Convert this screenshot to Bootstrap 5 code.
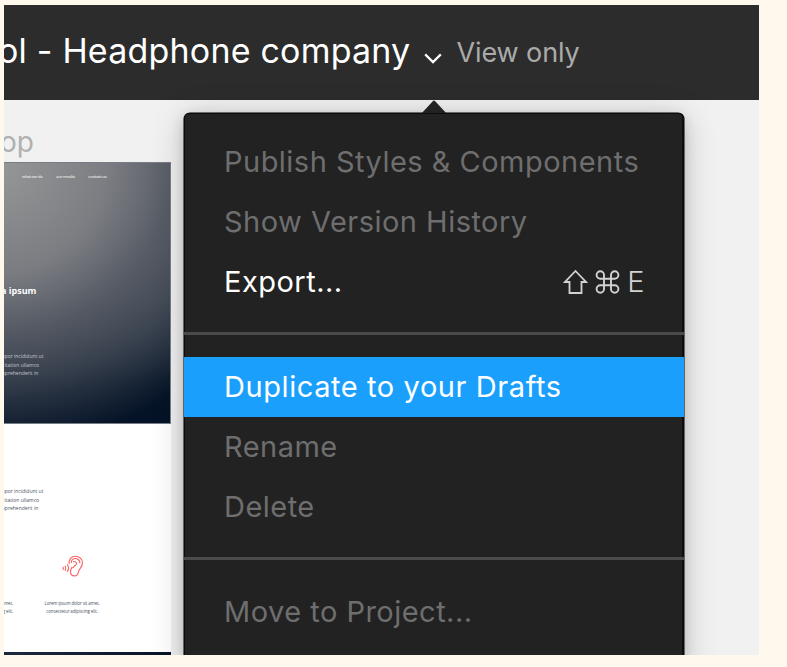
<!DOCTYPE html>
<html lang="en">
<head>
<meta charset="utf-8">
<title>Headphone company</title>
<link rel="stylesheet" href="https://cdn.jsdelivr.net/npm/bootstrap@5.3.0/dist/css/bootstrap.min.css">
<style>
body{background:#fff9ed;font-family:Inter,"Liberation Sans",sans-serif;height:667px;overflow:hidden;padding:5px 28px 12px 4px}
.stage{height:650px;background:#f1f1f1;font-weight:400}
.topbar{height:95px;background:#2c2c2c;white-space:nowrap}
.doc-title{font-size:34px;line-height:44px;letter-spacing:.2px;color:#fff;margin-left:-6px;padding-bottom:4px;font-weight:400}
.caret{width:18px;height:11px;margin:12px 0 0 14px}
.mode{font-size:27px;line-height:34px;color:#aaa;margin:1px 0 0 14px;letter-spacing:-.1px;font-weight:400}
.board{width:167px}
.board-name{height:62px;padding-top:25px;font-size:28px;line-height:34px;color:#b0b0b0;margin-left:-4px}
.hero{height:262px;border:solid #777d86;border-width:1px 1px 1px 0;color:#fff;background:radial-gradient(ellipse 300px 285px at -10px 0,#969898 0,#7b7d82 38%,rgba(91,95,104,.85) 60%,rgba(60,66,80,0) 100%),linear-gradient(172deg,#454a57 0,#404855 30%,#2a3644 55%,#081629 84%,#041227 100%)}
.tiny{font-family:"Open Sans","Noto Sans",sans-serif;font-size:5px;line-height:8.6px;white-space:nowrap}
.tiny-nav{height:30px;padding:10px 0 0 18px;gap:13.5px;font-weight:600;font-size:4.2px;letter-spacing:-.28px;color:#e4e4e4}
.hero-title{font:700 9px/12px "Open Sans","Noto Sans",sans-serif;margin:92px 0 0 -3px}
.hero-copy{margin:55px 0 0 -4px;color:#c3c7ce}
.page{height:228px;background:#fff;color:#4a5361}
.page-copy{padding-top:63px;margin-left:-4px}
.ear{width:22px;height:22px;margin:42px 0 0 58px}
.captions{margin-top:22px;text-align:center;font-size:4.4px;letter-spacing:-.1px;font-weight:500}
.cap-left{width:9px;direction:rtl}
.cap-right{width:56px;margin-left:31px}
.footer-strip{height:4px;background:linear-gradient(90deg,#1d2a3e,#071326)}
.menu-pop{left:180px;top:108px;width:500px;height:560px;background:#222;border-radius:6px 6px 0 0;padding-top:19px;font-size:29px;letter-spacing:.48px;line-height:60px;color:#6e6e6e;box-shadow:0 0 0 .5px #000,0 4px 34px rgba(0,0,0,.2),0 4px 14px rgba(0,0,0,.14)}
.menu-pop::after{content:"";position:absolute;inset:0;border:2px solid #0c0c0c;border-radius:5px 5px 0 0;pointer-events:none;border-width:1px 2px 0 1px}
.pointer{left:237px;top:-13px;width:26px;height:14px}
.entry{height:60px;padding:0 39px 0 40px;white-space:nowrap}
.entry.on{color:#fff}
.entry.picked{background:#1b9ffc;color:#fff;letter-spacing:.58px;position:relative;z-index:1}
.rule{height:3px;background:#4b4b4b;margin:20px 0 22px;position:relative;z-index:1}
.keys{color:#d2d2d2;gap:7px}
.keys span{font-weight:300}
</style>
</head>
<body>
<main class="stage position-relative overflow-hidden">
  <header class="topbar d-flex align-items-center">
    <div class="doc-title">ol - Headphone company</div>
    <svg class="caret" viewBox="0 0 18 11" fill="none" stroke="#fff" stroke-width="2.2"><path d="M1.2 1.4 9 9.1l7.8-7.7"/></svg>
    <div class="mode">View only</div>
  </header>
  <section class="board">
    <div class="board-name">op</div>
    <div class="hero tiny">
      <nav class="tiny-nav d-flex"><span>what we do</span><span>our results</span><span>contact us</span></nav>
      <div class="hero-title">a ipsum</div>
      <div class="hero-copy">mpor incididunt ut<br>rcitation ullamco<br>reprehenderit in</div>
    </div>
    <div class="page tiny">
      <div class="page-copy">mpor incididunt ut<br>rcitation ullamco<br>reprehenderit in</div>
      <svg class="ear d-block" viewBox="0 0 22 22" fill="none" stroke="#fa6464" stroke-width="1.15" stroke-linecap="round"><path d="M7.2 8.7C6.5 4.3 9.4 1.2 13.4 1.2c4 0 7.1 3 7.1 6.8 0 4.7-3.6 5.5-4.1 9-.3 2.5-1.7 3.9-3.9 3.9-2.4 0-4-1.6-4-4.1 0-1.8.8-2.8 1.1-4.1M9.4 7.5c0-2.3 1.7-4 4-4s4.5 1.8 4.5 4.3M11.5 6.7c2.1-.7 3.5.9 2.8 2.7-.5 1.2-1.8.8-2.1 1.8-.4 1.3-1.5 2-2.9 1.8M5.4 9.7c1.5 2.2 1.5 4.6 0 6.8M3.2 11c.9 1.5.9 2.9 0 4.4M1.1 12.2c.5.8.5 1.4 0 2.1"/></svg>
      <div class="captions d-flex"><div class="cap-left"><bdi>sit amet,</bdi><br><bdi>g elit.</bdi></div><div class="cap-right">Lorem ipsum dolor sit amet,<br>consectetur adipiscing elit.</div></div>
    </div>
    <div class="footer-strip"></div>
  </section>
  <div class="menu-pop position-absolute">
    <svg class="pointer position-absolute" viewBox="0 0 26 14"><path d="M0 14 11.8 1.2q1.2-1.2 2.4 0L26 14z" fill="#222"/></svg>
    <div class="entry"><span>Publish Styles &amp; Components</span></div>
    <div class="entry">Show Version History</div>
    <div class="entry on d-flex justify-content-between align-items-center"><span>Export...</span>
      <span class="keys d-flex align-items-center">
        <svg width="25" height="26" viewBox="0 0 25 26" fill="none" stroke="currentColor" stroke-width="1.8"><path d="M12.5 2 23 13h-4.5v11h-12V13H2z"/></svg>
        <svg width="25" height="26" viewBox="0 0 25 26" fill="none" stroke="currentColor" stroke-width="1.9"><path d="M9 9.7V6a3.7 3.7 0 1 0-3.7 3.7h14.4A3.7 3.7 0 1 0 16 6v14a3.7 3.7 0 1 0 3.7-3.7H5.3A3.7 3.7 0 1 0 9 20z"/></svg>
        <span>E</span>
      </span>
    </div>
    <div class="rule"></div>
    <div class="entry picked">Duplicate to your Drafts</div>
    <div class="entry">Rename</div>
    <div class="entry">Delete</div>
    <div class="rule"></div>
    <div class="entry">Move to Project...</div>
  </div>
</main>
<script src="https://cdn.jsdelivr.net/npm/bootstrap@5.3.0/dist/js/bootstrap.bundle.min.js"></script>
</body>
</html>
